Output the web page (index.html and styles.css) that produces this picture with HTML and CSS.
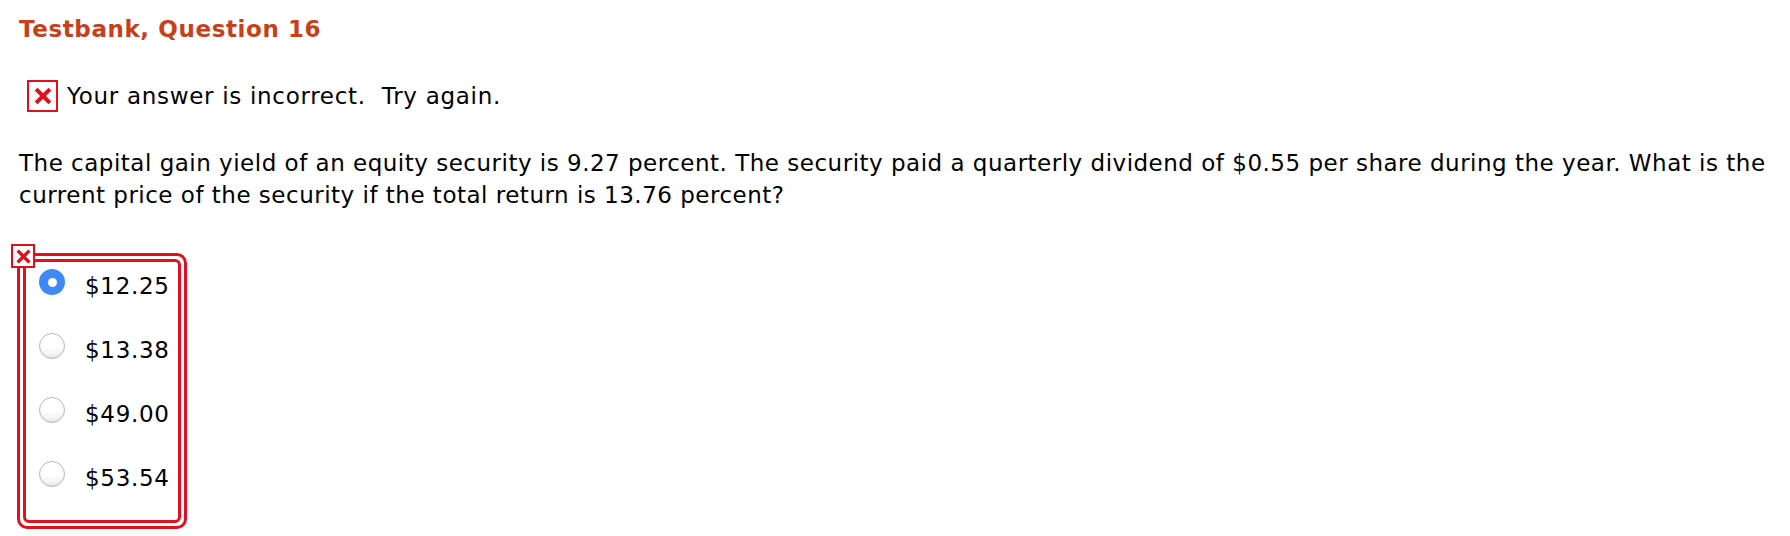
FILE: index.html
```html
<!DOCTYPE html>
<html lang="en">
<head>
<meta charset="utf-8">
<title>Testbank, Question 16</title>
<link rel="stylesheet" href="styles.css">
</head>
<body>
<div class="page">
  <h2 class="title">Testbank, Question 16</h2>
  <div class="feedback">
    <span class="xbox xbox-lg"><svg viewBox="0 0 18 18" width="18" height="18"><path d="M3.5 3.5 L14.5 14.5 M14.5 3.5 L3.5 14.5" stroke="#e2101d" stroke-width="4" stroke-linecap="square"/></svg></span>
    <span class="feedback-text">Your answer is incorrect.&nbsp; Try again.</span>
  </div>
  <p class="question">The capital gain yield of an equity security is 9.27 percent. The security paid a quarterly dividend of $0.55 per share during the year. What is the current price of the security if the total return is 13.76 percent?</p>
  <div class="answers">
    <span class="xbox xbox-sm"><svg viewBox="0 0 16 16" width="15" height="15"><path d="M3 3 L13 13 M13 3 L3 13" stroke="#e2101d" stroke-width="3.6" stroke-linecap="square"/></svg></span>
    <div class="outer">
      <div class="inner">
        <label class="option"><span class="radio checked"></span><span class="opt-text">$12.25</span></label>
        <label class="option"><span class="radio"></span><span class="opt-text">$13.38</span></label>
        <label class="option"><span class="radio"></span><span class="opt-text">$49.00</span></label>
        <label class="option"><span class="radio"></span><span class="opt-text">$53.54</span></label>
      </div>
    </div>
  </div>
</div>
</body>
</html>
```
FILE: styles.css
```css
html, body {
  margin: 0;
  padding: 0;
  background: #ffffff;
}
body {
  font-family: Verdana, "DejaVu Sans", sans-serif;
  color: #000000;
}
.page {
  padding: 16px 0 0 19px;
}
.title {
  margin: 0;
  font-size: 23px;
  line-height: 27px;
  font-weight: bold;
  letter-spacing: 0.6px;
  color: #c8401a;
}
.feedback {
  display: flex;
  align-items: center;
  gap: 9px;
  margin-top: 37px;
  margin-left: 8px;
  height: 32px;
}
.xbox {
  display: inline-flex;
  align-items: center;
  justify-content: center;
  box-sizing: border-box;
  background: #ffffff;
  border: 2px solid #e2101d;
}
.xbox-lg {
  width: 31px;
  height: 32px;
}
.feedback-text {
  font-size: 23px;
  line-height: 32px;
  letter-spacing: 0.7px;
}
.question {
  margin: 35px 0 0 0;
  font-size: 23px;
  line-height: 32px;
  letter-spacing: 0.5px;
}
.answers {
  position: relative;
  margin-top: 42px;
  margin-left: -2px;
  display: inline-block;
}
.xbox-sm {
  position: absolute;
  left: -6px;
  top: -9px;
  width: 24px;
  height: 24px;
  z-index: 1;
}
.outer {
  border: 3px solid #e2101d;
  border-radius: 10px;
  padding: 3px;
}
.inner {
  border: 3px solid #e2101d;
  border-radius: 6px;
  padding: 7px 8px 4px 13px;
}
.option {
  display: flex;
  align-items: center;
  gap: 20px;
  height: 26px;
  margin-bottom: 38px;
  font-size: 23px;
  letter-spacing: 0.7px;
}
.option:last-child {
  margin-bottom: 29px;
}
.opt-text {
  margin-top: 8px;
  line-height: 27px;
}
.radio {
  box-sizing: border-box;
  width: 26px;
  height: 26px;
  border-radius: 50%;
  border: 1px solid #b9b9b9;
  background: linear-gradient(#ffffff 0%, #ffffff 55%, #ececec 100%);
  box-shadow: inset 0 -1px 1px rgba(0,0,0,0.08);
  flex: none;
}
.radio.checked {
  border: none;
  background: #3d8af7;
  box-shadow: none;
  display: flex;
  align-items: center;
  justify-content: center;
}
.radio.checked::after {
  content: "";
  width: 9px;
  height: 9px;
  border-radius: 50%;
  background: #ffffff;
}
```
